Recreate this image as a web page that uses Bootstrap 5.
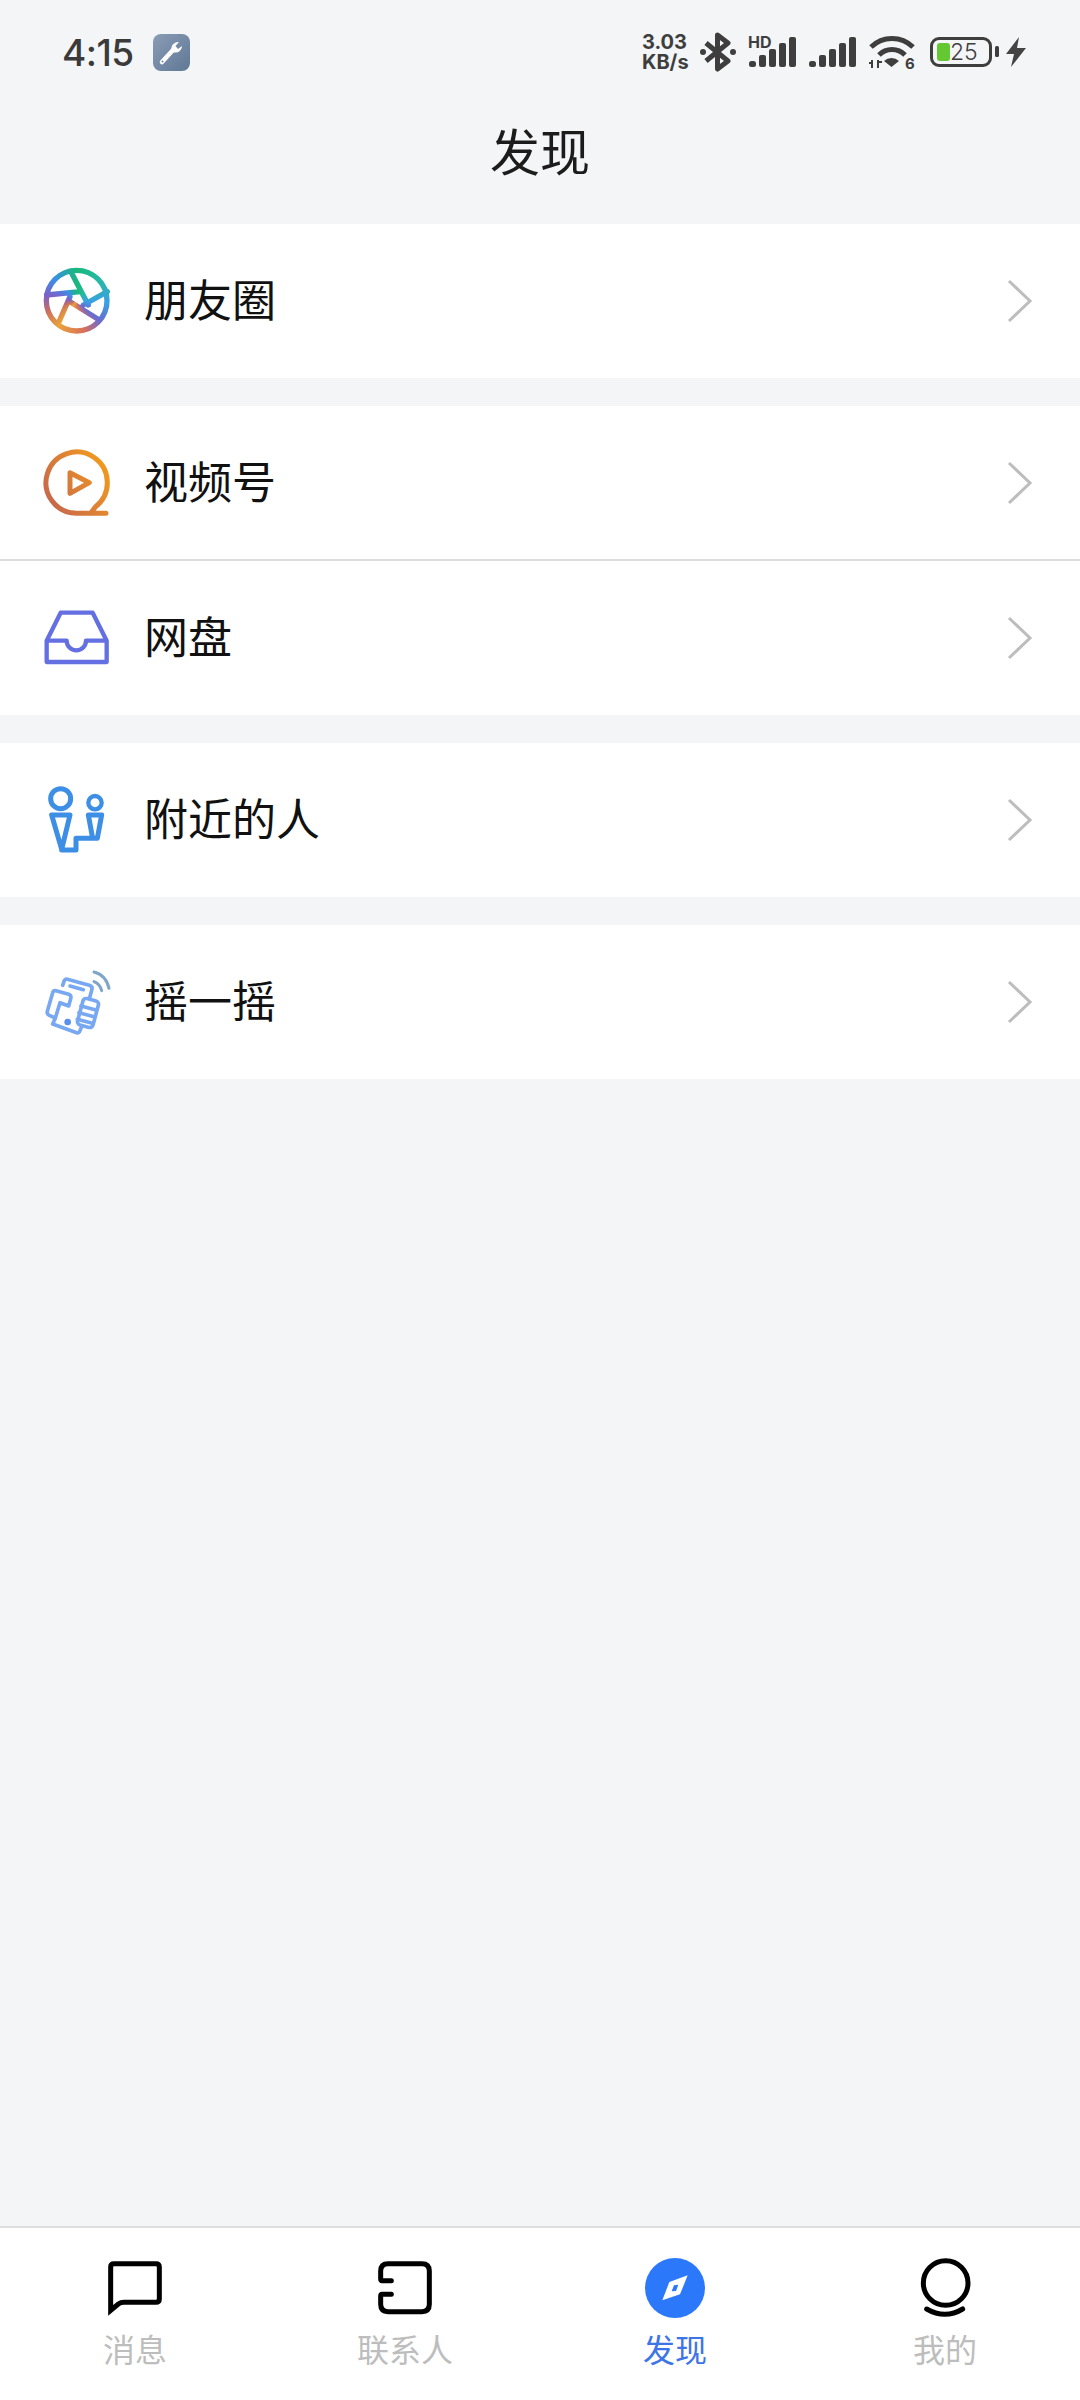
<!DOCTYPE html>
<html lang="zh-CN">
<head>
    <meta charset="UTF-8">
    <meta name="viewport" content="width=device-width, initial-scale=1.0">
    <title>发现</title>
    <link href="https://cdn.jsdelivr.net/npm/bootstrap@5.3.0/dist/css/bootstrap.min.css" rel="stylesheet">
    <style>
        body {
            width: 1080px;
            height: 2400px;
            background: #f4f5f7;
            font-family: "Noto Sans CJK SC", "Liberation Sans", sans-serif;
            overflow: hidden;
        }
        .status-row { height: 104px; padding: 0 54px 0 62px; }
        .clock { font-family: Inter, sans-serif; font-size: 37px; font-weight: 500; letter-spacing: -0.5px; color: #3a3a3a; line-height: 1; }
        .tool-badge { width: 37px; height: 37px; margin-left: 19px; border-radius: 8px; background: linear-gradient(135deg, #8a9cb6, #5f7895); }
        .net-speed { width: 48px; margin-right: 10px; font-family: Inter, sans-serif; font-size: 20px; font-weight: 700; line-height: 20px; color: #3e3e3e; white-space: nowrap; }
        .ico-bt, .ico-sig { margin-right: 12px; }
        .ico-wifi { margin-right: 14px; }
        .batt-shell { width: 62px; height: 30px; padding: 3px 0 3px 4px; border: 3px solid #3e3e3e; border-radius: 9px; }
        .batt-fill { width: 13px; height: 18px; border-radius: 3px; background: #63c832; }
        .batt-num { font-family: Inter, sans-serif; font-size: 23px; font-weight: 300; line-height: 1; color: #3e3e3e; }
        .batt-nub { margin: 0 7px 0 3px; }
        .page-title { height: 120px; padding-bottom: 30px; font-size: 50px; font-weight: 400; line-height: 1; color: #1c1c1c; }
        .entry-group { margin-bottom: 28px; border-radius: 0; }
        .entry-group .list-group-item { height: 154px; padding: 0 46px 0 44px; border-bottom-width: 0; }
        .entry-group .list-group-item:not(:last-child) { height: 155px; border-bottom: 2px solid #dcdcdc; }
        .entry-icon { width: 120px; height: 120px; margin: 0 -24px; flex: none; }
        .entry-name { margin-left: 28px; padding-bottom: 6px; font-size: 44px; line-height: 1; color: #111; }
        .cone-box { width: 360px; height: 360px; background: conic-gradient(from 0deg at 47% 50%, #18b87c 0deg, #27b8a8 50deg, #3a9fe6 95deg, #6a6bd0 130deg, #d9705a 165deg, #e9a23c 215deg, #c9705c 250deg, #7d5fc8 280deg, #3a8fe8 315deg, #18b87c 360deg); }
        .tab-bar { height: 174px; background: #fff; border-top: 2px solid #dedede; }
        .tab-item { width: 270px; padding-top: 25px; }
        .tab-icon { width: 70px; height: 70px; }
        .tab-label { margin-top: 3px; font-size: 32px; line-height: 44px; color: #bdbdbd; }
        .tab-label.is-on { color: #3d74e8; }
    </style>
</head>
<body class="d-flex flex-column">
    <div class="status-row d-flex align-items-center">
        <span class="clock">4:15</span>
        <div class="tool-badge d-flex align-items-center justify-content-center">
            <svg width="28" height="28" viewBox="0 0 28 28">
                <path d="M5 24 L16 12" stroke="#fff" stroke-width="4.5" stroke-linecap="round" fill="none"/>
                <path d="M15 13 A6.5 6.5 0 0 1 22 4 L18.5 8 L21 11 L25 8 A6.5 6.5 0 0 1 16 14 Z" fill="#fff"/>
                <circle cx="5.5" cy="23.5" r="1" fill="#6b829e"/>
            </svg>
        </div>
        <div class="net-speed ms-auto">3.03<br>KB/s</div>
        <svg class="ico-bt" width="36" height="40" viewBox="0 0 36 40">
            <path d="M6 11 L28 29 L17.5 37 V3 L28 11 L6 29" fill="none" stroke="#3e3e3e" stroke-width="5" stroke-linejoin="round"/>
            <circle cx="3" cy="20" r="3" fill="#3e3e3e"/><circle cx="33" cy="20" r="3" fill="#3e3e3e"/>
        </svg>
        <svg class="ico-sig" width="48" height="40" viewBox="0 0 48 40">
            <text x="0" y="16" font-family="Inter, sans-serif" font-size="16" font-weight="700" fill="#3e3e3e">HD</text>
            <g fill="#3e3e3e"><rect x="1" y="29" width="7" height="6" rx="2.500"/><rect x="11" y="23" width="7" height="12" rx="2"/><rect x="21" y="17" width="7" height="18" rx="2"/><rect x="31" y="11" width="7" height="24" rx="2"/><rect x="41" y="5" width="7" height="30" rx="2"/></g>
        </svg>
        <svg class="ico-sig" width="48" height="40" viewBox="0 0 48 40">
            <g fill="#3e3e3e"><rect x="1" y="29" width="7" height="6" rx="2.500"/><rect x="11" y="23" width="7" height="12" rx="2"/><rect x="21" y="17" width="7" height="18" rx="2"/><rect x="31" y="11" width="7" height="24" rx="2"/><rect x="41" y="5" width="7" height="30" rx="2"/></g>
        </svg>
        <svg class="ico-wifi" width="48" height="44" viewBox="0 0 48 44">
            <path d="M3 17 A30 30 0 0 1 45 17 M11 25 A18 18 0 0 1 37 25" fill="none" stroke="#3e3e3e" stroke-width="5"/>
            <path d="M16 31 A11 11 0 0 1 31 31 L23.500 37 Z" fill="#3e3e3e"/>
            <text x="37" y="39" font-family="Inter, sans-serif" font-size="15" font-weight="700" fill="#3e3e3e">6</text>
            <path d="M1 33 H5 M4 30 V38 M10 30 V38 M10 32 H14" stroke="#3e3e3e" stroke-width="2" fill="none"/>
        </svg>
        <div class="batt-shell d-flex align-items-center">
            <div class="batt-fill"></div>
            <span class="batt-num">25</span>
        </div>
        <svg class="batt-nub" width="4" height="12" viewBox="0 0 4 12">
            <rect width="4" height="11" rx="1.5" fill="#3e3e3e"/>
        </svg>
        <svg width="20" height="30" viewBox="0 0 20 30">
            <path d="M13 0 L0 17 H8 L5 30 L20 11 H11 Z" fill="#444"/>
        </svg>
    </div>

    <div class="page-title d-flex align-items-center justify-content-center">发现</div>

    <ul class="list-group list-group-flush entry-group">
        <li class="list-group-item d-flex align-items-center">
            <svg class="entry-icon" viewBox="0 0 360 360">
                <mask id="shutter"><g fill="none" stroke="#fff" stroke-width="16" stroke-linecap="round" transform="translate(0,-3)">
                    <circle cx="170" cy="182" r="91"/>
                    <path d="M155 100 L205 195 M262 155 L190 195 M238 240 L150 185 M115 250 L150 170 M80 165 L180 155"/>
                </g></mask>
                <foreignObject x="0" y="0" width="360" height="360" mask="url(#shutter)">
                    <div xmlns="http://www.w3.org/1999/xhtml" class="cone-box"></div>
                </foreignObject>
            </svg>
            <span class="entry-name">朋友圈</span>
            <svg class="ms-auto" width="28" height="46" viewBox="0 0 28 46"><path d="M3 3 L24 23 L3 43" fill="none" stroke="#bdbdbd" stroke-width="3"/></svg>
        </li>
    </ul>

    <ul class="list-group list-group-flush entry-group">
        <li class="list-group-item d-flex align-items-center">
            <svg class="entry-icon" viewBox="0 0 360 360">
                <defs><linearGradient id="playGrad" gradientUnits="userSpaceOnUse" x1="75" y1="230" x2="265" y2="110"><stop offset="0" stop-color="#c4644f"/><stop offset="1" stop-color="#f29a1e"/></linearGradient></defs>
                <g transform="translate(0,21)" fill="none" stroke="url(#playGrad)" stroke-width="15" stroke-linecap="round" stroke-linejoin="round">
                    <path d="M170 250 A92 92 0 1 1 226 231 L212 250 M170 250 H258"/>
                    <path d="M150 128 L208 158 L150 190 Z"/>
                </g>
            </svg>
            <span class="entry-name">视频号</span>
            <svg class="ms-auto" width="28" height="46" viewBox="0 0 28 46"><path d="M3 3 L24 23 L3 43" fill="none" stroke="#bdbdbd" stroke-width="3"/></svg>
        </li>
        <li class="list-group-item d-flex align-items-center">
            <svg class="entry-icon" viewBox="0 0 360 360">
                <g fill="none" stroke="#6470e2" stroke-width="13" stroke-linejoin="round" transform="translate(0,6)">
                    <path d="M80 182 L122 98 H218 L260 182 V246 H80 Z"/>
                    <path d="M80 182 H140 A29 29 0 0 0 198 182 H260"/>
                </g>
            </svg>
            <span class="entry-name">网盘</span>
            <svg class="ms-auto" width="28" height="46" viewBox="0 0 28 46"><path d="M3 3 L24 23 L3 43" fill="none" stroke="#bdbdbd" stroke-width="3"/></svg>
        </li>
    </ul>

    <ul class="list-group list-group-flush entry-group">
        <li class="list-group-item d-flex align-items-center">
            <svg class="entry-icon" viewBox="0 0 360 360">
                <g fill="none" stroke="#3d8fe6" stroke-width="15" stroke-linejoin="round" stroke-linecap="round">
                    <circle cx="122" cy="116" r="30"/>
                    <circle cx="225" cy="128" r="20" stroke-width="13"/>
                    <path d="M95 165 H150 L125 268 Z M125 270 H168 V235 H232 L245 165 H205 L218 235"/>
                </g>
            </svg>
            <span class="entry-name">附近的人</span>
            <svg class="ms-auto" width="28" height="46" viewBox="0 0 28 46"><path d="M3 3 L24 23 L3 43" fill="none" stroke="#bdbdbd" stroke-width="3"/></svg>
        </li>
    </ul>

    <ul class="list-group list-group-flush entry-group">
        <li class="list-group-item d-flex align-items-center">
            <svg class="entry-icon" viewBox="0 0 360 360">
                <g transform="translate(0,24)">
                    <g fill="none" stroke="#78a8f2" stroke-width="11" stroke-linecap="round" stroke-linejoin="round">
                        <path d="M128 106 L132 94 Q134 86 142 88 L208 106 Q218 109 216 118 L208 146"/>
                        <path d="M150 108 L190 119"/>
                        <path d="M108 122 L146 133 Q155 136 152 146 L146 168 L120 158 L106 204 L88 196 Q80 192 82 184 L98 128 Q100 120 108 122 Z"/>
                        <path d="M106 204 L98 222 L170 248 Q178 250 180 242 L184 232"/>
                        <rect x="180" y="148" width="48" height="82" rx="10" transform="rotate(15 204 189)"/>
                        <path d="M183 168 L228 180 M177 188 L222 200 M172 208 L217 220"/>
                    </g>
                    <circle cx="143" cy="216" r="10" fill="#5a90ea"/>
                    <path d="M222 95 Q240 102 245 122 M222 66 Q258 75 267 115" fill="none" stroke="#7fa6c8" stroke-width="9" stroke-linecap="round"/>
                </g>
            </svg>
            <span class="entry-name">摇一摇</span>
            <svg class="ms-auto" width="28" height="46" viewBox="0 0 28 46"><path d="M3 3 L24 23 L3 43" fill="none" stroke="#bdbdbd" stroke-width="3"/></svg>
        </li>
    </ul>

    <nav class="tab-bar d-flex mt-auto">
        <div class="tab-item d-flex flex-column align-items-center">
            <svg class="tab-icon" viewBox="120 98 210 210">
                <path d="M152 270 V140 Q152 130 162 130 H288 Q298 130 298 140 V236 Q298 246 288 246 H192 Q182 246 175 251 Z" fill="none" stroke="#000" stroke-width="15"/>
            </svg>
            <div class="tab-label">消息</div>
        </div>
        <div class="tab-item d-flex flex-column align-items-center">
            <svg class="tab-icon" viewBox="930 98 210 210">
                <path d="M994 181 H966 Q962 181 962 176 V152 Q962 130 984 130 H1086 Q1108 130 1108 152 V252 Q1108 274 1086 274 H984 Q962 274 962 252 V228 Q962 222 966 222 H994" fill="none" stroke="#000" stroke-width="15" stroke-linecap="round"/>
            </svg>
            <div class="tab-label">联系人</div>
        </div>
        <div class="tab-item d-flex flex-column align-items-center">
            <svg class="tab-icon" viewBox="120 98 210 210">
                <circle cx="225" cy="203" r="90" fill="#2b78fb"/>
                <path d="M263 165 L240 222 L187 240 L208 185 Z" fill="#fff"/>
                <path d="M235 193 L228 212 L215 213 L222 195 Z" fill="#2b78fb"/>
            </svg>
            <div class="tab-label is-on">发现</div>
        </div>
        <div class="tab-item d-flex flex-column align-items-center">
            <svg class="tab-icon" viewBox="930 98 210 210">
                <circle cx="1037" cy="188" r="67" fill="none" stroke="#000" stroke-width="15"/>
                <path d="M980 266 Q1035 298 1088 266" fill="none" stroke="#000" stroke-width="15" stroke-linecap="round"/>
            </svg>
            <div class="tab-label">我的</div>
        </div>
    </nav>
</body>
</html>
